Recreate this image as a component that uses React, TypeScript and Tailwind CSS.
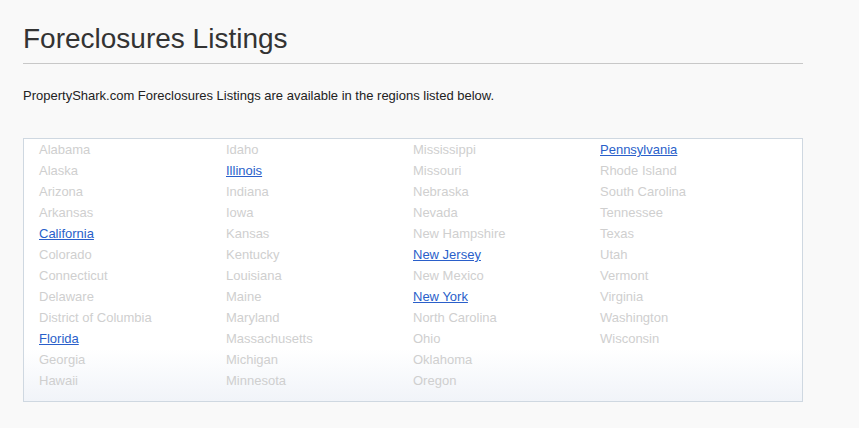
import React from "react";

const columns: string[][] = [
  ["Alabama", "Alaska", "Arizona", "Arkansas", "California", "Colorado", "Connecticut", "Delaware", "District of Columbia", "Florida", "Georgia", "Hawaii"],
  ["Idaho", "Illinois", "Indiana", "Iowa", "Kansas", "Kentucky", "Louisiana", "Maine", "Maryland", "Massachusetts", "Michigan", "Minnesota"],
  ["Mississippi", "Missouri", "Nebraska", "Nevada", "New Hampshire", "New Jersey", "New Mexico", "New York", "North Carolina", "Ohio", "Oklahoma", "Oregon"],
  ["Pennsylvania", "Rhode Island", "South Carolina", "Tennessee", "Texas", "Utah", "Vermont", "Virginia", "Washington", "Wisconsin"],
];

const active = new Set(["California", "Florida", "Illinois", "New Jersey", "New York", "Pennsylvania"]);

export default function App() {
  return (
    <div className="min-h-screen w-full bg-[#f9f9f9] font-['Liberation_Sans',Arial,sans-serif] text-[#333]">
      <div className="ml-[23px] w-[780px] pt-[21px]">
        <h1 className="text-[28px] leading-[36px] text-[#333] pb-[6px] border-b border-[#c8c8c8]">
          Foreclosures Listings
        </h1>
        <p className="mt-[24px] text-[13px] leading-[15px] text-[#222]">
          PropertyShark.com Foreclosures Listings are available in the regions listed below.
        </p>
        <div className="mt-[35px] w-[780px] border border-[#cfd8e1] bg-gradient-to-b from-white from-80% to-[#f1f4f9] pl-[15px] pb-[10px] grid grid-cols-[187px_187px_187px_187px]">
          {columns.map((col, i) => (
            <ul key={i} className="flex flex-col">
              {col.map((s) => (
                <li key={s} className="h-[21px] text-[13px] leading-[21px]">
                  {active.has(s) ? (
                    <a href="#" className="text-[#2a5fca] underline">
                      {s}
                    </a>
                  ) : (
                    <span className="text-[#cfcfcf]">{s}</span>
                  )}
                </li>
              ))}
            </ul>
          ))}
        </div>
      </div>
    </div>
  );
}
